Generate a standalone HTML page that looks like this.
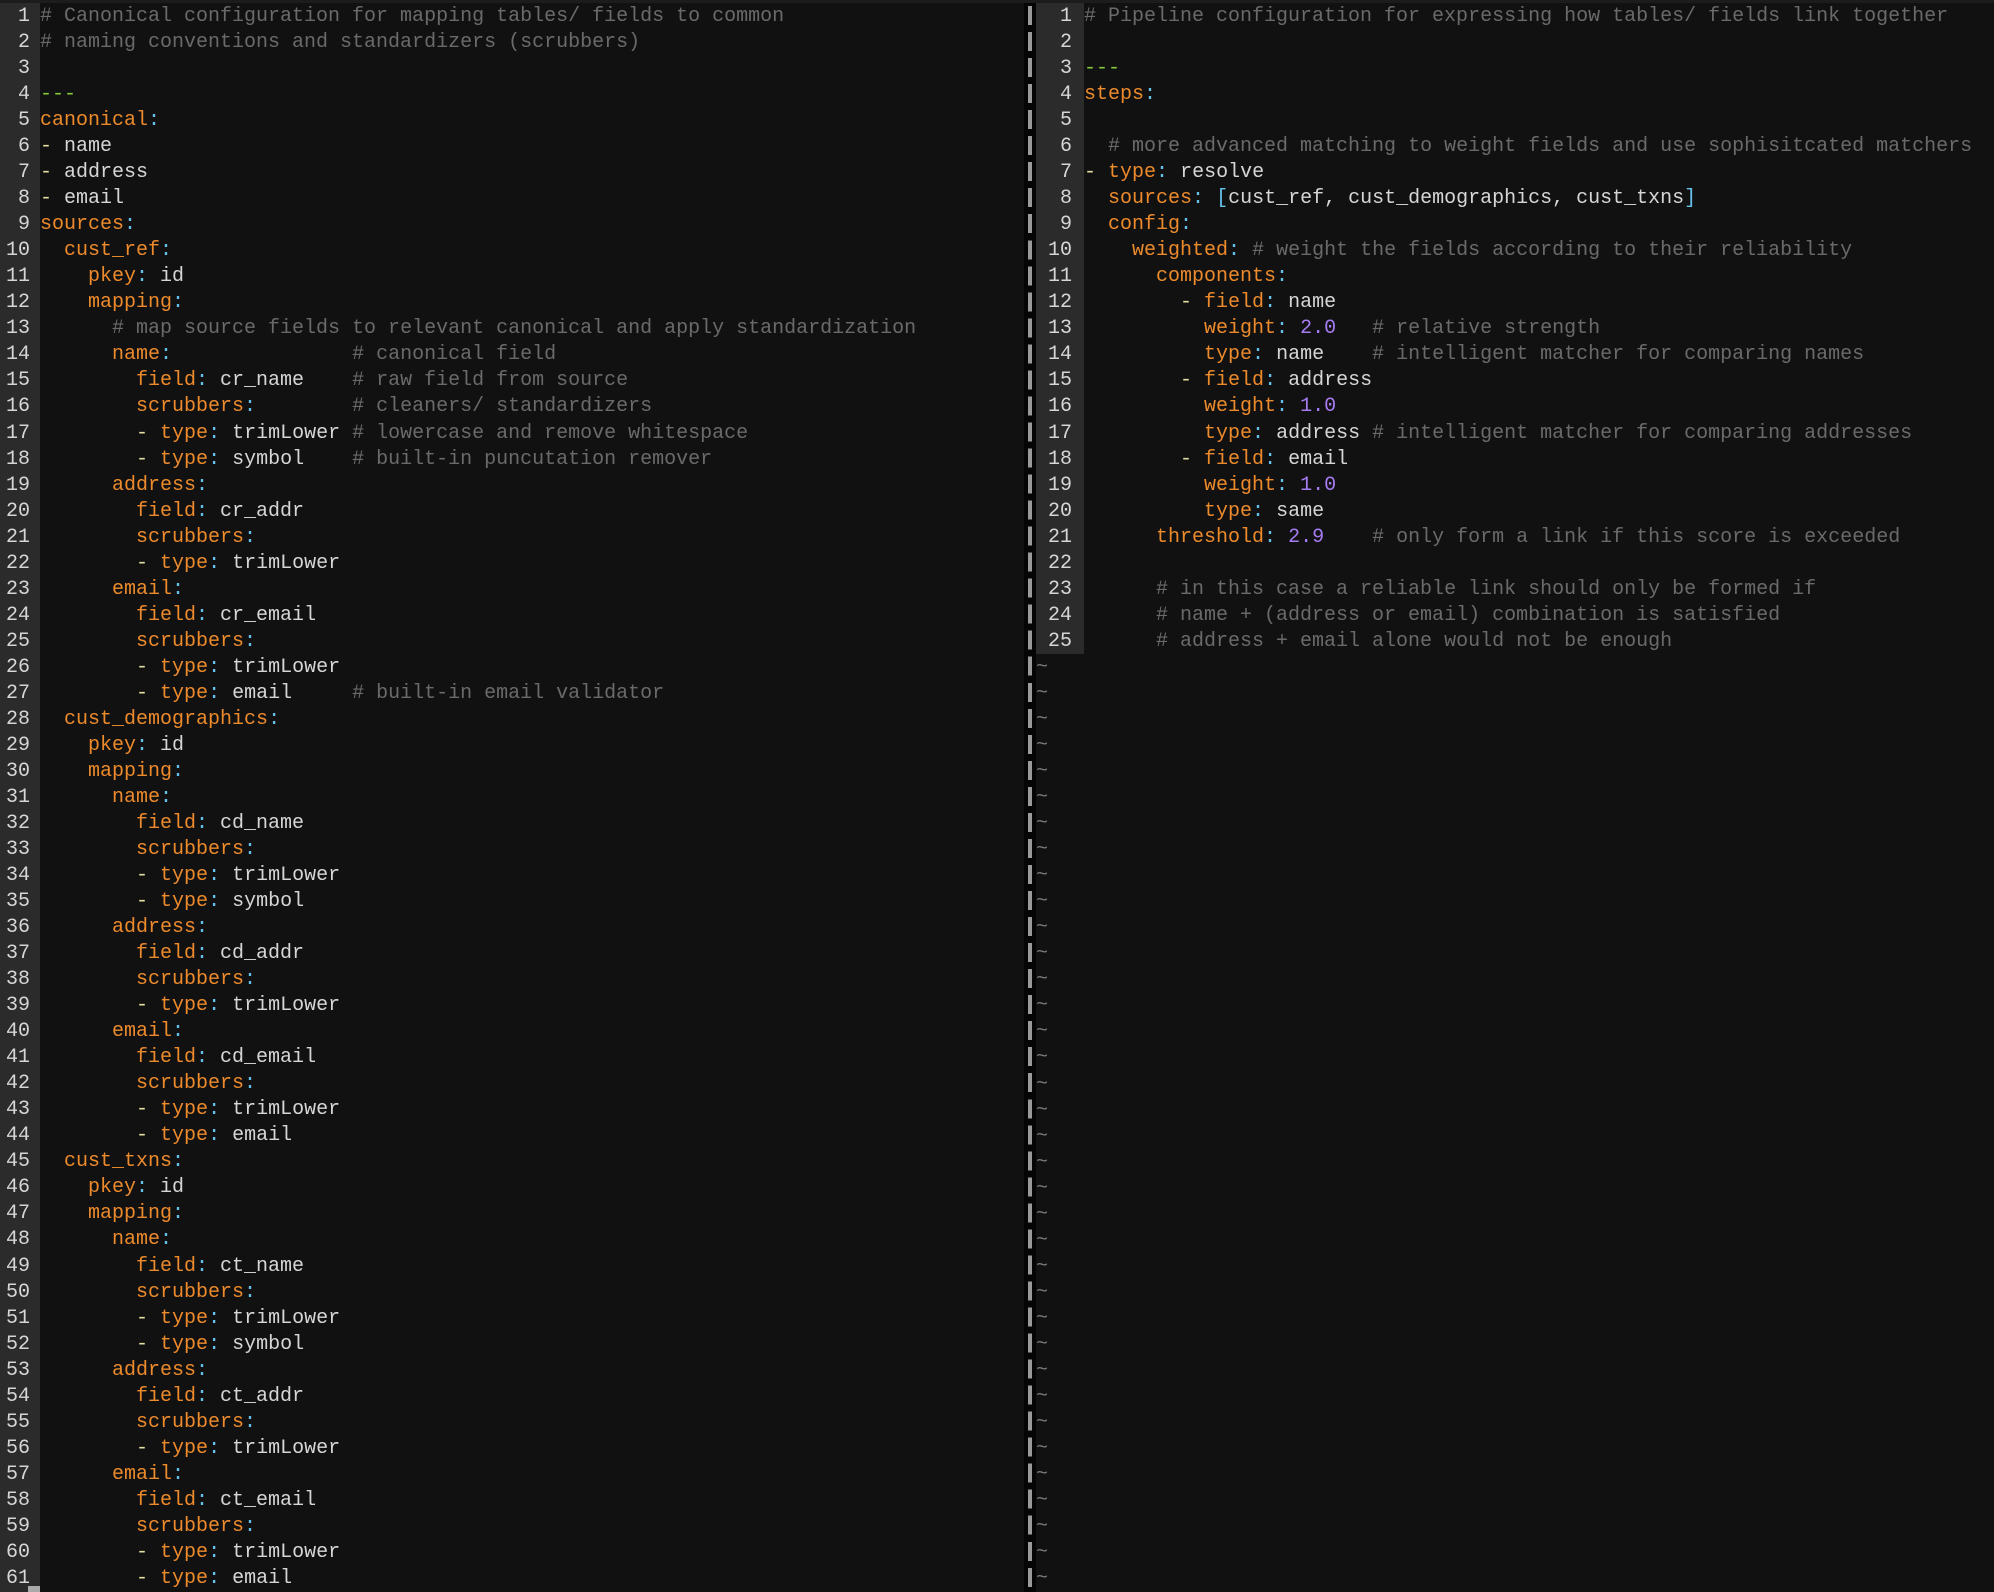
<!DOCTYPE html>
<html><head><meta charset="utf-8"><style>
html,body{margin:0;padding:0;background:#111111;width:1994px;height:1592px;overflow:hidden;}
body{position:relative;font-family:"Liberation Mono","DejaVu Sans Mono",monospace;font-size:20px;}
.top{position:absolute;left:0;top:0;width:1994px;height:3px;background:#1c1c1c;}
pre{margin:0;font:inherit;line-height:26.03px;white-space:pre;color:#d6d6d6;}
.gut{position:absolute;top:3px;background:#2b2b2b;color:#c8c8c8;text-align:right;}
.k{color:#ec8a2c}.c{color:#67c2ee}.d{color:#e4e0a4}.m{color:#6a6a6a}.n{color:#a67cf2}.g{color:#86cc3a}.t{color:#777}
</style></head><body>
<div class="top"></div>
<div class="gut" style="left:0;width:40px;height:1589px;"><pre style="padding-top:1px;padding-right:10px;box-sizing:border-box;width:40px"><script>document.write(Array.from({length:61},(_,i)=>i+1).join("\n"))</script></pre></div>
<div style="position:absolute;left:28px;top:1586px;width:12px;height:6px;background:#aaa"></div>
<div style="position:absolute;left:40px;top:4px;"><pre><span class="m"># Canonical configuration for mapping tables/ fields to common</span>
<span class="m"># naming conventions and standardizers (scrubbers)</span>

<span class="g">---</span>
<span class="k">canonical</span><span class="c">:</span>
<span class="d">-</span> name
<span class="d">-</span> address
<span class="d">-</span> email
<span class="k">sources</span><span class="c">:</span>
  <span class="k">cust_ref</span><span class="c">:</span>
    <span class="k">pkey</span><span class="c">:</span> id
    <span class="k">mapping</span><span class="c">:</span>
      <span class="m"># map source fields to relevant canonical and apply standardization</span>
      <span class="k">name</span><span class="c">:</span>               <span class="m"># canonical field</span>
        <span class="k">field</span><span class="c">:</span> cr_name    <span class="m"># raw field from source</span>
        <span class="k">scrubbers</span><span class="c">:</span>        <span class="m"># cleaners/ standardizers</span>
        <span class="d">-</span> <span class="k">type</span><span class="c">:</span> trimLower <span class="m"># lowercase and remove whitespace</span>
        <span class="d">-</span> <span class="k">type</span><span class="c">:</span> symbol    <span class="m"># built-in puncutation remover</span>
      <span class="k">address</span><span class="c">:</span>
        <span class="k">field</span><span class="c">:</span> cr_addr
        <span class="k">scrubbers</span><span class="c">:</span>
        <span class="d">-</span> <span class="k">type</span><span class="c">:</span> trimLower
      <span class="k">email</span><span class="c">:</span>
        <span class="k">field</span><span class="c">:</span> cr_email
        <span class="k">scrubbers</span><span class="c">:</span>
        <span class="d">-</span> <span class="k">type</span><span class="c">:</span> trimLower
        <span class="d">-</span> <span class="k">type</span><span class="c">:</span> email     <span class="m"># built-in email validator</span>
  <span class="k">cust_demographics</span><span class="c">:</span>
    <span class="k">pkey</span><span class="c">:</span> id
    <span class="k">mapping</span><span class="c">:</span>
      <span class="k">name</span><span class="c">:</span>
        <span class="k">field</span><span class="c">:</span> cd_name
        <span class="k">scrubbers</span><span class="c">:</span>
        <span class="d">-</span> <span class="k">type</span><span class="c">:</span> trimLower
        <span class="d">-</span> <span class="k">type</span><span class="c">:</span> symbol
      <span class="k">address</span><span class="c">:</span>
        <span class="k">field</span><span class="c">:</span> cd_addr
        <span class="k">scrubbers</span><span class="c">:</span>
        <span class="d">-</span> <span class="k">type</span><span class="c">:</span> trimLower
      <span class="k">email</span><span class="c">:</span>
        <span class="k">field</span><span class="c">:</span> cd_email
        <span class="k">scrubbers</span><span class="c">:</span>
        <span class="d">-</span> <span class="k">type</span><span class="c">:</span> trimLower
        <span class="d">-</span> <span class="k">type</span><span class="c">:</span> email
  <span class="k">cust_txns</span><span class="c">:</span>
    <span class="k">pkey</span><span class="c">:</span> id
    <span class="k">mapping</span><span class="c">:</span>
      <span class="k">name</span><span class="c">:</span>
        <span class="k">field</span><span class="c">:</span> ct_name
        <span class="k">scrubbers</span><span class="c">:</span>
        <span class="d">-</span> <span class="k">type</span><span class="c">:</span> trimLower
        <span class="d">-</span> <span class="k">type</span><span class="c">:</span> symbol
      <span class="k">address</span><span class="c">:</span>
        <span class="k">field</span><span class="c">:</span> ct_addr
        <span class="k">scrubbers</span><span class="c">:</span>
        <span class="d">-</span> <span class="k">type</span><span class="c">:</span> trimLower
      <span class="k">email</span><span class="c">:</span>
        <span class="k">field</span><span class="c">:</span> ct_email
        <span class="k">scrubbers</span><span class="c">:</span>
        <span class="d">-</span> <span class="k">type</span><span class="c">:</span> trimLower
        <span class="d">-</span> <span class="k">type</span><span class="c">:</span> email</pre></div>

<div style="position:absolute;left:1024px;top:3px;width:12px;height:1589px;background:#050505;"></div>
<div style="position:absolute;left:1028px;top:6px;width:4px;height:1586px;background:repeating-linear-gradient(to bottom,#9a9a9a 0,#9a9a9a 19px,transparent 19px,transparent 26.03px);"></div>

<div class="gut" style="left:1036px;width:48px;height:651px;"><pre style="padding-top:1px;padding-right:12px;box-sizing:border-box;width:48px"><script>document.write(Array.from({length:25},(_,i)=>i+1).join("\n"))</script></pre></div>
<div style="position:absolute;left:1036px;top:655px;"><pre class="t"><script>document.write(Array(36).fill("~").join("\n"))</script></pre></div>

<div style="position:absolute;left:1084px;top:4px;"><pre><span class="m"># Pipeline configuration for expressing how tables/ fields link together</span>

<span class="g">---</span>
<span class="k">steps</span><span class="c">:</span>

  <span class="m"># more advanced matching to weight fields and use sophisitcated matchers</span>
<span class="d">-</span> <span class="k">type</span><span class="c">:</span> resolve
  <span class="k">sources</span><span class="c">:</span> <span class="c">[</span>cust_ref, cust_demographics, cust_txns<span class="c">]</span>
  <span class="k">config</span><span class="c">:</span>
    <span class="k">weighted</span><span class="c">:</span> <span class="m"># weight the fields according to their reliability</span>
      <span class="k">components</span><span class="c">:</span>
        <span class="d">-</span> <span class="k">field</span><span class="c">:</span> name
          <span class="k">weight</span><span class="c">:</span> <span class="n">2.0</span>   <span class="m"># relative strength</span>
          <span class="k">type</span><span class="c">:</span> name    <span class="m"># intelligent matcher for comparing names</span>
        <span class="d">-</span> <span class="k">field</span><span class="c">:</span> address
          <span class="k">weight</span><span class="c">:</span> <span class="n">1.0</span>
          <span class="k">type</span><span class="c">:</span> address <span class="m"># intelligent matcher for comparing addresses</span>
        <span class="d">-</span> <span class="k">field</span><span class="c">:</span> email
          <span class="k">weight</span><span class="c">:</span> <span class="n">1.0</span>
          <span class="k">type</span><span class="c">:</span> same
      <span class="k">threshold</span><span class="c">:</span> <span class="n">2.9</span>    <span class="m"># only form a link if this score is exceeded</span>

      <span class="m"># in this case a reliable link should only be formed if</span>
      <span class="m"># name + (address or email) combination is satisfied</span>
      <span class="m"># address + email alone would not be enough</span></pre></div>
</body></html>
